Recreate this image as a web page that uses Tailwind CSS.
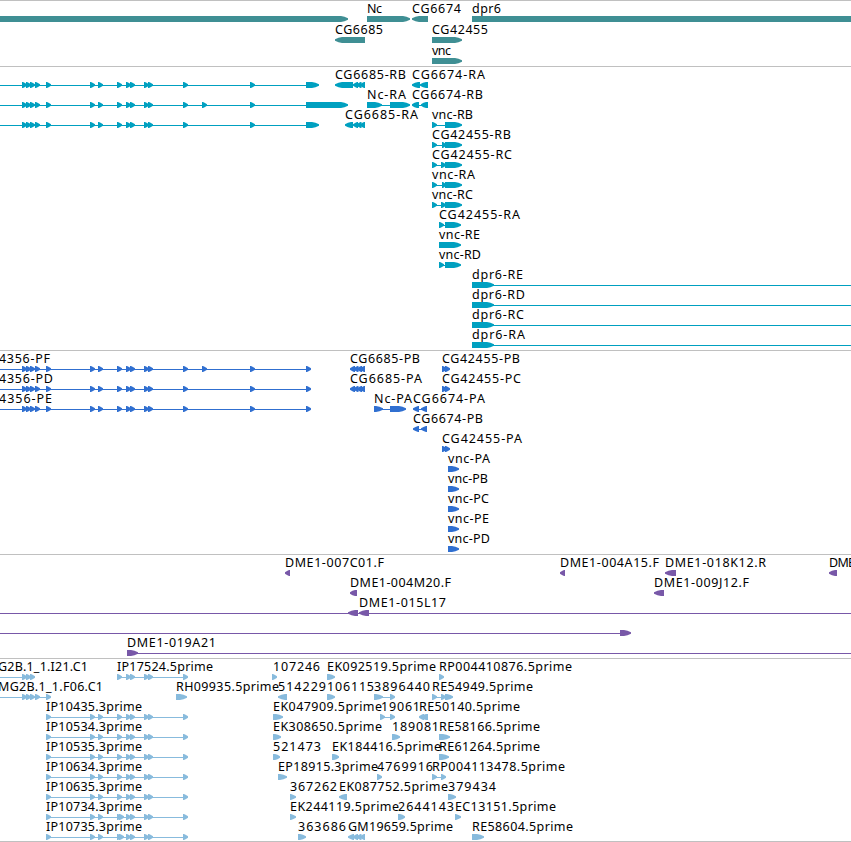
<!DOCTYPE html>
<html lang="en">
<head>
  <meta charset="UTF-8" />
  <meta name="viewport" content="width=device-width, initial-scale=1.0" />
  <title>Genome tracks</title>
  <script src="https://cdn.jsdelivr.net/npm/@tailwindcss/browser@4"></script>
</head>
<body class="bg-white overflow-hidden font-['Noto_Sans',sans-serif]">
  <main class="flex flex-col w-[851px] border-b border-[#c0c0c0]">
    <section class="h-[66px] border-t border-[#c0c0c0]"><svg id="genes" class="block w-full h-full text-[#3f8f94]"></svg></section>
    <section class="h-[284px] border-t border-[#c0c0c0]"><svg id="transcripts" class="block w-full h-full text-[#00a0c0]"></svg></section>
    <section class="h-[204px] border-t border-[#c0c0c0]"><svg id="proteins" class="block w-full h-full text-[#306fd0]"></svg></section>
    <section class="h-[104px] border-t border-[#c0c0c0]"><svg id="clones" class="block w-full h-full text-[#7858a8]"></svg></section>
    <section class="h-[183px] border-t border-[#c0c0c0]"><svg id="ests" class="block w-full h-full text-[#88bbdd]"></svg></section>
  </main>

<script>
  const NS = 'http://www.w3.org/2000/svg';

  function add(svg, tag, attrs) {
    const el = document.createElementNS(NS, tag);
    for (const k in attrs) el.setAttribute(k, attrs[k]);
    svg.appendChild(el);
    return el;
  }

  // exon: block that ends in an arrow head, dir 1 = right, -1 = left
  function exon(svg, a, b, y, dir) {
    const w = b - a;
    const head = w <= 6 ? w - 1 : Math.min(w - 2, 7);
    const tip = dir > 0 ? b : a;
    const tail = dir > 0 ? a : b;
    const neck = tip - dir * head;
    const mid = tip - dir * head * 0.5;
    const drop = w <= 6 ? 1 : 0.8;
    const pts = [[tail, y], [neck, y], [mid, y + drop], [tip, y + 2.3], [tip, y + 3.7], [mid, y + 6 - drop], [neck, y + 6], [tail, y + 6]];
    add(svg, 'polygon', { points: pts.map(p => p.join(',')).join(' '), class: 'fill-current' });
  }

  // feature: [row, label, labelStart, labelEnd, dir, exons, line]
  function draw(id, pitch, features) {
    const svg = document.getElementById(id);
    for (const [row, label, x1, x2, dir, exons, line] of features) {
      const y = 15 + row * pitch;
      if (line) add(svg, 'rect', { x: line[0], y: y + 3, width: line[1] - line[0], height: 1, class: 'fill-current' });
      exons.forEach(([a, b]) => exon(svg, a, b, y, dir));
      if (label) {
        add(svg, 'text', { x: x1, y: y - 3, textLength: x2 - x1, class: 'fill-black text-[12.5px]' }).textContent = label;
      }
    }
  }

  const small = xs => xs.map(x => [x, x + 5]);
  const shortExons = small([22, 26, 30, 35, 46, 90, 98, 117, 126, 130, 144, 148, 183, 250]);
  const longExons = small([22, 26, 30, 35, 46, 90, 98, 117, 126, 130, 144, 148, 183, 202, 250]);
  const ipExons = small([46, 90, 98, 117, 126, 130, 144, 148, 183]);
  const ipExtra = small([46, 90, 98, 117, 119, 126, 130, 144, 148, 183]);
  const tail6685 = small([353, 356.5, 360]);

  draw('genes', 21, [
    [0, '', 0, 0, 1, [[-10, 348]]],
    [0, 'Nc', 367, 382, 1, [[367, 410]]],
    [0, 'CG6674', 412, 461, -1, [[412, 428]]],
    [0, 'dpr6', 472, 501, 1, [[472, 880]]],
    [1, 'CG6685', 335, 383, -1, [[335, 365]]],
    [1, 'CG42455', 432, 488, 1, [[432, 462]]],
    [2, 'vnc', 432, 451, 1, [[432, 462]]],
  ]);

  draw('transcripts', 20, [
    [0, '', 0, 0, 1, [...shortExons, [306, 319]], [0, 306]],
    [1, '', 0, 0, 1, [...longExons, [306, 348]], [0, 306]],
    [2, '', 0, 0, 1, [...shortExons, [306, 319]], [0, 306]],
    [0, 'CG6685-RB', 335, 406, -1, [[335, 353], ...tail6685]],
    [0, 'CG6674-RA', 412, 485, -1, [[412, 420], [420, 428]]],
    [1, 'Nc-RA', 367, 406, 1, [[367, 382], [390, 410]], [380, 391]],
    [1, 'CG6674-RB', 412, 483, -1, [[412, 419], [421, 428]], [417, 424]],
    [2, 'CG6685-RA', 345, 418, -1, [[345, 353], ...tail6685]],
    [2, 'vnc-RB', 432, 473, 1, [[432, 437], [445, 462]], [436, 446]],
    [3, 'CG42455-RB', 432, 511, 1, [[432, 437], [442, 446], [445, 462]], [436, 443]],
    [4, 'CG42455-RC', 432, 512, 1, [[432, 437], [441, 446], [445, 462]], [436, 443]],
    [5, 'vnc-RA', 432, 475, 1, [[432, 437], [442, 446], [445, 462]], [436, 443]],
    [6, 'vnc-RC', 432, 473, 1, [[432, 437], [441, 446], [445, 462]], [436, 443]],
    [7, 'CG42455-RA', 439, 520, 1, [[439, 444], [445, 461]], [442, 446]],
    [8, 'vnc-RE', 439, 480, 1, [[439, 461]]],
    [9, 'vnc-RD', 439, 481, 1, [[439, 444], [445, 461]], [442, 446]],
    [10, 'dpr6-RE', 472, 523, 1, [[472, 494]], [490, 851]],
    [11, 'dpr6-RD', 472, 525, 1, [[472, 494]], [490, 851]],
    [12, 'dpr6-RC', 472, 524, 1, [[472, 494]], [490, 851]],
    [13, 'dpr6-RA', 472, 525, 1, [[472, 494]], [490, 851]],
  ]);

  draw('proteins', 20, [
    [0, '4356-PF', -1, 50, 1, [...longExons, [306, 311]], [0, 306]],
    [1, '4356-PD', -1, 53, 1, [...shortExons, [306, 311]], [0, 306]],
    [2, '4356-PE', -1, 52, 1, [...shortExons, [306, 311]], [0, 306]],
    [0, 'CG6685-PB', 350, 420, -1, small([350, 353.5, 357, 360])],
    [1, 'CG6685-PA', 350, 422, -1, small([350, 353.5, 357, 360])],
    [0, 'CG42455-PB', 442, 520, 1, small([442, 445])],
    [1, 'CG42455-PC', 442, 521, 1, small([442, 445])],
    [2, 'Nc-PA', 374, 412, 1, [[374, 383], [390, 406]], [381, 391]],
    [2, 'CG6674-PA', 413, 485, -1, [[413, 419], [421, 427]], [417, 423]],
    [3, 'CG6674-PB', 413, 483, -1, [[413, 419], [421, 427]], [417, 423]],
    [4, 'CG42455-PA', 442, 522, 1, small([442, 445])],
    [5, 'vnc-PA', 448, 490, 1, [[448, 459]]],
    [6, 'vnc-PB', 448, 488, 1, [[448, 459]]],
    [7, 'vnc-PC', 448, 489, 1, [[448, 459]]],
    [8, 'vnc-PE', 448, 489, 1, [[448, 459]]],
    [9, 'vnc-PD', 448, 490, 1, [[448, 459]]],
  ]);

  draw('clones', 20, [
    [0, 'DME1-007C01.F', 285, 384, -1, [[285, 290]]],
    [0, 'DME1-004A15.F', 560, 659, -1, [[560, 565]]],
    [0, 'DME1-018K12.R', 665, 766, -1, [[665, 676]]],
    [0, 'DME', 829, 855, -1, [[829, 837]]],
    [1, 'DME1-004M20.F', 350, 451, -1, [[350, 357]]],
    [1, 'DME1-009J12.F', 654, 749, -1, [[654, 664]]],
    [2, 'DME1-015L17', 359, 446, -1, [[348, 358], [359, 369]], [0, 851]],
    [3, '', 0, 0, 1, [[620, 631]], [0, 621]],
    [4, 'DME1-019A21', 127, 216, 1, [[127, 138]], [135, 851]],
  ]);

  draw('ests', 20, [
    [0, 'G2B.1_1.I21.C1', -2, 88, 1, small([22, 26, 30]), [0, 30]],
    [0, 'IP17524.5prime', 117, 213, 1, small([117, 126, 130, 144, 148, 183]), [117, 184]],
    [0, '107246', 273, 320, 1, [[272, 277]]],
    [0, 'EK092519.5prime', 327, 436, 1, [[327, 335]]],
    [0, 'RP004410876.5prime', 439, 572, 1, [[439, 444]]],
    [1, 'MG2B.1_1.F06.C1', -2, 103, 1, small([22, 26, 30, 35, 46]), [0, 47]],
    [1, 'RH09935.5prime', 176, 279, 1, [[176, 187]]],
    [1, '514229', 278, 326, -1, [[278, 287]]],
    [1, '106115', 327, 374, 1, [[327, 335]]],
    [1, '3896440', 374, 430, 1, [[374, 383], [390, 395]], [381, 391]],
    [1, 'RE54949.5prime', 432, 533, 1, [[432, 437], [441, 446], [445, 453]], [435, 443]],
    [2, 'IP10435.3prime', 46, 142, 1, ipExons, [46, 184]],
    [2, 'EK047909.5prime', 273, 382, 1, [[273, 283]]],
    [2, '19061', 381, 420, 1, [[380, 385], [390, 395]], [383, 391]],
    [2, 'RE50140.5prime', 419, 520, -1, [[419, 424], [421, 428]]],
    [3, 'IP10534.3prime', 46, 142, 1, ipExons, [46, 184]],
    [3, 'EK308650.5prime', 273, 382, 1, [[273, 281]]],
    [3, '189081', 392, 439, 1, [[392, 400]]],
    [3, 'RE58166.5prime', 439, 540, 1, [[439, 450]]],
    [4, 'IP10535.3prime', 46, 142, 1, ipExons, [46, 184]],
    [4, '521473', 273, 321, 1, [[273, 280]]],
    [4, 'EK184416.5prime', 332, 441, 1, [[332, 339]]],
    [4, 'RE61264.5prime', 439, 540, 1, [[439, 449]]],
    [5, 'IP10634.3prime', 46, 142, 1, ipExons, [46, 184]],
    [5, 'EP18915.3prime', 278, 378, 1, [[278, 287]]],
    [5, '4769916', 377, 433, 1, [[377, 382]]],
    [5, 'RP004113478.5prime', 432, 565, 1, [[432, 437], [441, 446]], [435, 443]],
    [6, 'IP10635.3prime', 46, 142, 1, ipExons, [46, 184]],
    [6, '367262', 290, 337, 1, [[290, 296]]],
    [6, 'EK087752.5prime', 339, 448, -1, [[339, 347]]],
    [6, '379434', 448, 496, 1, [[448, 456]]],
    [7, 'IP10734.3prime', 46, 142, 1, ipExtra, [46, 184]],
    [7, 'EK244119.5prime', 290, 399, 1, [[290, 296]]],
    [7, '2644143', 398, 454, 1, [[398, 405]]],
    [7, 'EC13151.5prime', 455, 556, 1, [[455, 461]]],
    [8, 'IP10735.3prime', 46, 142, 1, ipExtra, [46, 184]],
    [8, '363686', 298, 346, 1, [[298, 306]]],
    [8, 'GM19659.5prime', 348, 453, -1, [[348, 354], ...tail6685]],
    [8, 'RE58604.5prime', 472, 573, 1, [[472, 484]]],
  ]);
</script>
</body>
</html>
